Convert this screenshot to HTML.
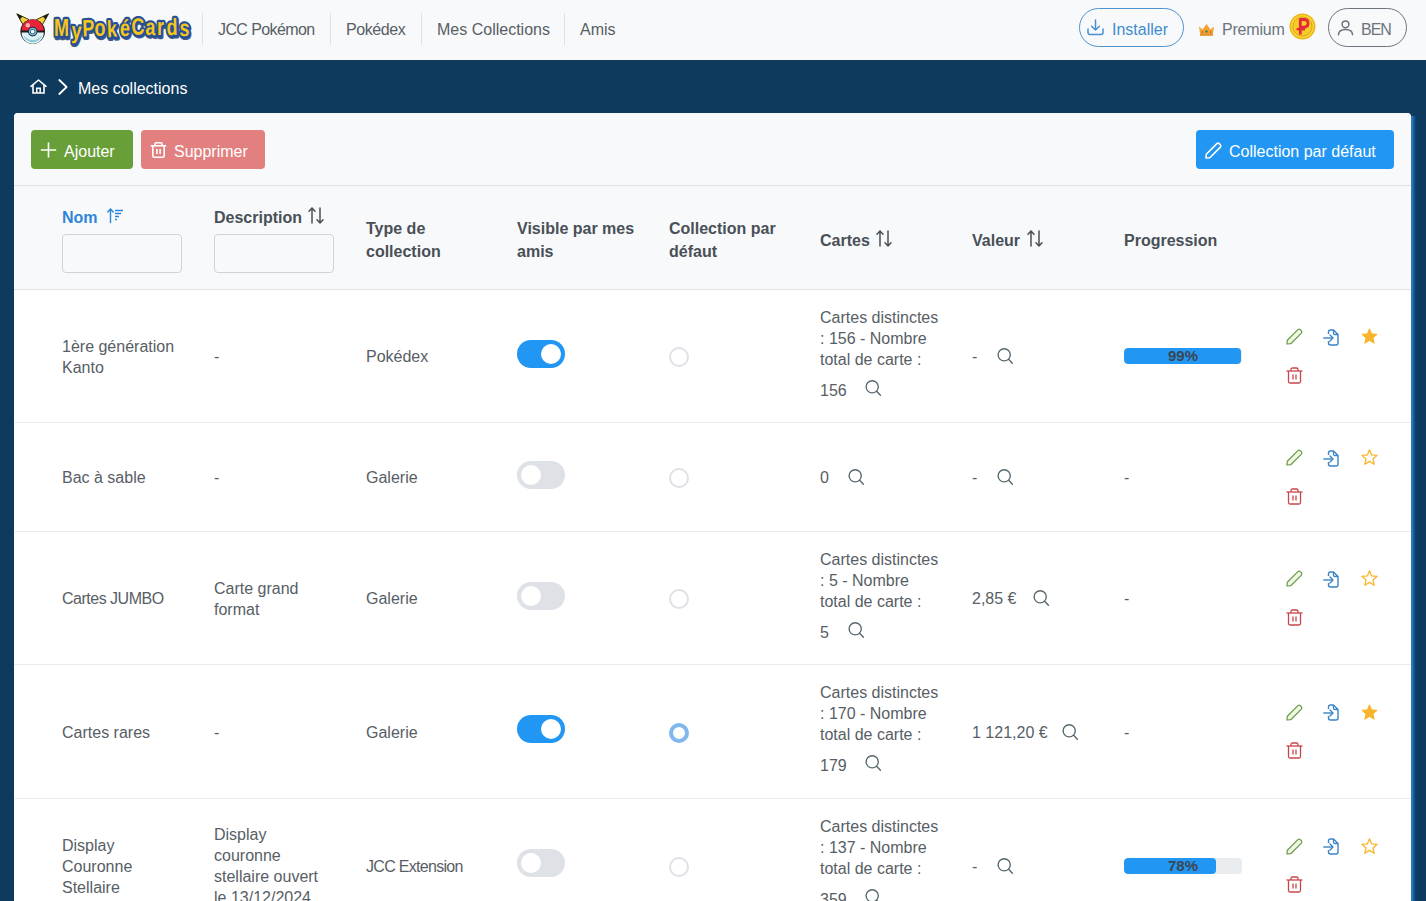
<!DOCTYPE html>
<html lang="fr">
<head>
<meta charset="utf-8">
<title>Mes collections</title>
<style>
*{box-sizing:border-box;}
html,body{margin:0;padding:0;}
body{width:1426px;height:901px;overflow:hidden;position:relative;background:#0e3a5e;font-family:"Liberation Sans",sans-serif;font-size:16px;color:#495057;}
.ic{position:absolute;overflow:visible;}
#hdr{position:absolute;left:0;top:0;width:1426px;height:60px;background:#f8f9fa;}
.nav{position:absolute;top:20px;line-height:20px;color:#575e65;font-size:16px;white-space:nowrap;}
.sep{position:absolute;top:13px;width:1px;height:32px;background:#dee2e6;}
.pill{position:absolute;top:8px;height:39px;border-radius:20px;border:1px solid;}
#bc{position:absolute;left:78px;top:79px;line-height:20px;color:#fff;white-space:nowrap;}
#card{position:absolute;left:14px;top:113px;width:1397px;height:800px;background:#fff;border-radius:4px 4px 0 0;}
#shadow{position:absolute;left:1411px;top:116px;width:7px;height:800px;background:linear-gradient(90deg,#3a78a6 0,#2a7fc2 1px,#1d6ab4 2px,#15549a 3px,#10457c 4px,#0e3d68 5px,#0e3a5e 7px);}
#tb{position:absolute;left:14px;top:113px;width:1397px;height:73px;background:#f8f9fa;border-bottom:1px solid #dee2e6;border-radius:4px 4px 0 0;}
.btn{position:absolute;top:130px;height:39px;border-radius:4px;color:#fff;}
.btn span{position:absolute;top:12px;line-height:20px;white-space:nowrap;}
#th{position:absolute;left:14px;top:186px;width:1397px;height:104px;background:#f8f9fa;border-bottom:1px solid #dee2e6;}
.h{position:absolute;font-weight:700;color:#495057;line-height:23px;white-space:nowrap;}
.inp{position:absolute;top:234px;width:120px;height:39px;border:1px solid #ced4da;border-radius:4px;background:#f8f9fa;}
.row{position:absolute;left:14px;width:1397px;border-bottom:1px solid #e9ecef;background:#fff;}
.t{position:absolute;line-height:21px;white-space:nowrap;color:#575e65;}
.sw{position:absolute;width:48px;height:28px;border-radius:14px;}
.sw.on{background:#2196f3;}
.sw.off{background:#dee2e6;}
.sw i{position:absolute;top:4px;width:20px;height:20px;border-radius:50%;background:#fff;}
.sw.on i{left:24px;}
.sw.off i{left:4px;}
.rd{position:absolute;width:20px;height:20px;border-radius:50%;border:2px solid #dee2e6;background:#fff;}
.rd.on{border:4px solid #7fb7ee;}
.pb{position:absolute;width:118px;height:16px;border-radius:4px;background:#e9ecef;overflow:hidden;}
.pf{position:absolute;left:0;top:0;height:16px;background:#2196f3;border-radius:4px;}
.pl{position:absolute;left:0;top:0;width:118px;text-align:center;font-weight:700;font-size:15px;line-height:16px;color:#3c4650;}

</style>
</head>
<body>
<div id="hdr">
<svg class="ic" style="left:14px;top:10px" width="36" height="36" viewBox="0 0 36 36"><path d="M2.8 3.8 L15 9.6 L9.2 15 Z" fill="#f3d23a" stroke="#2a2400" stroke-width="0.9" stroke-linejoin="round"/><path d="M2.8 3.8 L8.6 6.6 L5.7 9.4 Z" fill="#1e1e1e"/><path d="M34.6 3.8 L22.4 9.6 L28.2 15 Z" fill="#f3d23a" stroke="#2a2400" stroke-width="0.9" stroke-linejoin="round"/><path d="M34.6 3.8 L28.8 6.6 L31.7 9.4 Z" fill="#1e1e1e"/><circle cx="18.7" cy="21.5" r="12.3" fill="#1a1a1a"/><path d="M7.6 20.6 A11.1 11.1 0 0 1 29.8 20.6 Z" fill="#e8243a"/><path d="M7.6 22.6 A11.1 11.1 0 0 0 29.8 22.6 Z" fill="#dff3f6"/><path d="M9.5 25 A9.5 9.5 0 0 0 28 25 A11.1 11.1 0 0 1 9.5 25Z" fill="#8fcad8"/><circle cx="13.8" cy="15.2" r="2.2" fill="#f6b3bc"/><circle cx="18.7" cy="21.6" r="4.8" fill="#1a2a40"/><circle cx="18.7" cy="21.6" r="3.8" fill="#7cc4dc"/><circle cx="18.7" cy="21.6" r="2.6" fill="#2a5a78"/><circle cx="18.7" cy="21.6" r="1.9" fill="#eaf7fb"/></svg><svg class="ic" style="left:50px;top:6.5px" width="145" height="40" viewBox="0 0 145 40"><g transform="scale(1,1.3)"><g transform="translate(1,1.2)" opacity="0.85"><text x="11.5" y="22.31" text-anchor="middle" transform="rotate(0 11.5 16.15)" font-family="Liberation Sans" font-weight="700" font-size="18" fill="#1b3e78" stroke="#1b3e78" stroke-width="3.4" paint-order="stroke" stroke-linejoin="round">M</text><text x="26.5" y="24.23" text-anchor="middle" transform="rotate(3 26.5 18.08)" font-family="Liberation Sans" font-weight="700" font-size="18" fill="#1b3e78" stroke="#1b3e78" stroke-width="3.4" paint-order="stroke" stroke-linejoin="round">y</text><text x="38.5" y="22.31" text-anchor="middle" transform="rotate(-3 38.5 16.15)" font-family="Liberation Sans" font-weight="700" font-size="18" fill="#1b3e78" stroke="#1b3e78" stroke-width="3.4" paint-order="stroke" stroke-linejoin="round">P</text><text x="50.0" y="22.69" text-anchor="middle" transform="rotate(0 50.0 16.54)" font-family="Liberation Sans" font-weight="700" font-size="18" fill="#1b3e78" stroke="#1b3e78" stroke-width="3.4" paint-order="stroke" stroke-linejoin="round">o</text><text x="62.0" y="23.08" text-anchor="middle" transform="rotate(-3 62.0 16.92)" font-family="Liberation Sans" font-weight="700" font-size="18" fill="#1b3e78" stroke="#1b3e78" stroke-width="3.4" paint-order="stroke" stroke-linejoin="round">k</text><text x="75.0" y="22.31" text-anchor="middle" transform="rotate(2 75.0 16.15)" font-family="Liberation Sans" font-weight="700" font-size="18" fill="#1b3e78" stroke="#1b3e78" stroke-width="3.4" paint-order="stroke" stroke-linejoin="round">é</text><text x="88.0" y="21.15" text-anchor="middle" transform="rotate(-3 88.0 15.00)" font-family="Liberation Sans" font-weight="700" font-size="18" fill="#1b3e78" stroke="#1b3e78" stroke-width="3.4" paint-order="stroke" stroke-linejoin="round">C</text><text x="100.5" y="21.54" text-anchor="middle" transform="rotate(2 100.5 15.38)" font-family="Liberation Sans" font-weight="700" font-size="18" fill="#1b3e78" stroke="#1b3e78" stroke-width="3.4" paint-order="stroke" stroke-linejoin="round">a</text><text x="110.5" y="21.54" text-anchor="middle" transform="rotate(0 110.5 15.38)" font-family="Liberation Sans" font-weight="700" font-size="18" fill="#1b3e78" stroke="#1b3e78" stroke-width="3.4" paint-order="stroke" stroke-linejoin="round">r</text><text x="122.0" y="21.54" text-anchor="middle" transform="rotate(-2 122.0 15.38)" font-family="Liberation Sans" font-weight="700" font-size="18" fill="#1b3e78" stroke="#1b3e78" stroke-width="3.4" paint-order="stroke" stroke-linejoin="round">d</text><text x="134.5" y="22.31" text-anchor="middle" transform="rotate(3 134.5 16.15)" font-family="Liberation Sans" font-weight="700" font-size="18" fill="#1b3e78" stroke="#1b3e78" stroke-width="3.4" paint-order="stroke" stroke-linejoin="round">s</text></g><text x="11.5" y="22.31" text-anchor="middle" transform="rotate(0 11.5 16.15)" font-family="Liberation Sans" font-weight="700" font-size="18" fill="#f6c619" stroke="#264f96" stroke-width="3.4" paint-order="stroke" stroke-linejoin="round">M</text><text x="26.5" y="24.23" text-anchor="middle" transform="rotate(3 26.5 18.08)" font-family="Liberation Sans" font-weight="700" font-size="18" fill="#f6c619" stroke="#264f96" stroke-width="3.4" paint-order="stroke" stroke-linejoin="round">y</text><text x="38.5" y="22.31" text-anchor="middle" transform="rotate(-3 38.5 16.15)" font-family="Liberation Sans" font-weight="700" font-size="18" fill="#f6c619" stroke="#264f96" stroke-width="3.4" paint-order="stroke" stroke-linejoin="round">P</text><text x="50.0" y="22.69" text-anchor="middle" transform="rotate(0 50.0 16.54)" font-family="Liberation Sans" font-weight="700" font-size="18" fill="#f6c619" stroke="#264f96" stroke-width="3.4" paint-order="stroke" stroke-linejoin="round">o</text><text x="62.0" y="23.08" text-anchor="middle" transform="rotate(-3 62.0 16.92)" font-family="Liberation Sans" font-weight="700" font-size="18" fill="#f6c619" stroke="#264f96" stroke-width="3.4" paint-order="stroke" stroke-linejoin="round">k</text><text x="75.0" y="22.31" text-anchor="middle" transform="rotate(2 75.0 16.15)" font-family="Liberation Sans" font-weight="700" font-size="18" fill="#f6c619" stroke="#264f96" stroke-width="3.4" paint-order="stroke" stroke-linejoin="round">é</text><text x="88.0" y="21.15" text-anchor="middle" transform="rotate(-3 88.0 15.00)" font-family="Liberation Sans" font-weight="700" font-size="18" fill="#f6c619" stroke="#264f96" stroke-width="3.4" paint-order="stroke" stroke-linejoin="round">C</text><text x="100.5" y="21.54" text-anchor="middle" transform="rotate(2 100.5 15.38)" font-family="Liberation Sans" font-weight="700" font-size="18" fill="#f6c619" stroke="#264f96" stroke-width="3.4" paint-order="stroke" stroke-linejoin="round">a</text><text x="110.5" y="21.54" text-anchor="middle" transform="rotate(0 110.5 15.38)" font-family="Liberation Sans" font-weight="700" font-size="18" fill="#f6c619" stroke="#264f96" stroke-width="3.4" paint-order="stroke" stroke-linejoin="round">r</text><text x="122.0" y="21.54" text-anchor="middle" transform="rotate(-2 122.0 15.38)" font-family="Liberation Sans" font-weight="700" font-size="18" fill="#f6c619" stroke="#264f96" stroke-width="3.4" paint-order="stroke" stroke-linejoin="round">d</text><text x="134.5" y="22.31" text-anchor="middle" transform="rotate(3 134.5 16.15)" font-family="Liberation Sans" font-weight="700" font-size="18" fill="#f6c619" stroke="#264f96" stroke-width="3.4" paint-order="stroke" stroke-linejoin="round">s</text></g></svg>
<div class="nav" style="left:218px;letter-spacing:-0.6px">JCC Pokémon</div>
<div class="nav" style="left:346px;letter-spacing:-0.4px">Pokédex</div>
<div class="nav" style="left:437px">Mes Collections</div>
<div class="nav" style="left:580px">Amis</div>
<div class="sep" style="left:202px"></div>
<div class="sep" style="left:330px"></div>
<div class="sep" style="left:421px"></div>
<div class="sep" style="left:564px"></div>
<div class="pill" style="left:1079px;width:105px;border-color:#4d93d0;"></div>
<svg class="ic" style="left:1087px;top:19px" width="17" height="17" viewBox="0 0 17 17"><path d="M8.5 1 V11 M4.6 7.2 L8.5 11 L12.4 7.2" fill="none" stroke="#4a90d0" stroke-width="1.5" stroke-linecap="round" stroke-linejoin="round"/><path d="M1 10 V13.5 Q1 15.5 3 15.5 H14 Q16 15.5 16 13.5 V10" fill="none" stroke="#4a90d0" stroke-width="1.5" stroke-linecap="round"/></svg>
<div class="nav" style="left:1112px;color:#3f8ccf">Installer</div>
<svg class="ic" style="left:1198px;top:23px" width="17" height="13" viewBox="0 0 17 13"><path d="M1 3.5 L4.5 6.5 L8.5 1 L12.5 6.5 L16 3.5 L15 10.5 H2 Z" fill="#f4a234"/><rect x="2" y="10.2" width="13" height="2.6" fill="#e89224"/><circle cx="8.5" cy="8.5" r="1.2" fill="#3b8a3e"/><circle cx="4.5" cy="9" r="0.7" fill="#c0392b"/><circle cx="12.5" cy="9" r="0.7" fill="#c0392b"/></svg>
<div class="nav" style="left:1222px;color:#6c757d;letter-spacing:-0.2px">Premium</div>
<svg class="ic" style="left:1289px;top:13px" width="27" height="27" viewBox="0 0 27 27"><circle cx="13.5" cy="13.5" r="13" fill="#f3c21b"/><circle cx="13.5" cy="13.5" r="12.2" fill="#f8d43a" stroke="#e2a90f" stroke-width="0.8"/><circle cx="13.5" cy="13.5" r="9.6" fill="#f7cc2a" stroke="#d99e12" stroke-width="0.9"/><path d="M11.3 21.5 V6.5 H15 Q19 6.5 19 10.3 Q19 14.1 15 14.1 H11.3" fill="none" stroke="#e5283a" stroke-width="2.8" stroke-linejoin="round"/><path d="M7.6 16.2 H16" stroke="#e5283a" stroke-width="2.4"/></svg>
<div class="pill" style="left:1328px;width:79px;border-color:#6c757d;"></div>
<svg class="ic" style="left:1337px;top:20px" width="17" height="16" viewBox="0 0 17 16"><circle cx="8.5" cy="4.3" r="3.4" fill="none" stroke="#6c757d" stroke-width="1.5"/><path d="M1.5 14.8 Q1.5 9.5 8.5 9.5 Q15.5 9.5 15.5 14.8" fill="none" stroke="#6c757d" stroke-width="1.5" stroke-linecap="round"/></svg>
<div class="nav" style="left:1361px;color:#6c757d;letter-spacing:-1px">BEN</div>
</div>
<svg class="ic" style="left:30px;top:79px" width="17" height="15" viewBox="0 0 17 15"><path d="M1 7.3 L8.5 1 L16 7.3" fill="none" stroke="#fff" stroke-width="1.6" stroke-linecap="round" stroke-linejoin="round"/><path d="M3 6 V14 H14 V6" fill="none" stroke="#fff" stroke-width="1.6"/><path d="M6.8 14 V9.3 H10.2 V14" fill="none" stroke="#fff" stroke-width="1.5"/></svg>
<svg class="ic" style="left:58px;top:79px" width="10" height="16" viewBox="0 0 10 16"><path d="M1.3 1 L8.6 8 L1.3 15" fill="none" stroke="#fff" stroke-width="1.8" stroke-linecap="round" stroke-linejoin="round"/></svg>
<div id="bc">Mes collections</div>
<div id="card"></div><div id="shadow"></div><div id="tb"></div>
<div class="btn" style="left:31px;width:102px;background:#689f38;"><span style="left:33px">Ajouter</span></div>
<svg class="ic" style="left:40px;top:142px" width="17" height="16" viewBox="0 0 17 16"><path d="M8.5 0.5 V15.5 M0.8 8 H16.2" stroke="#fff" stroke-width="1.6"/></svg>
<div class="btn" style="left:141px;width:124px;background:#e28080;"><span style="left:33px">Supprimer</span></div>
<svg class="ic" style="left:150px;top:142px" width="17" height="16" viewBox="0 0 17 16"><path d="M0.8 3.8 H16.2" stroke="#fff" stroke-width="1.6"/><path d="M5 3.8 V2.2 Q5 0.8 6.4 0.8 H10.6 Q12 0.8 12 2.2 V3.8" fill="none" stroke="#fff" stroke-width="1.6"/><path d="M2.8 3.8 V13.7 Q2.8 15.2 4.3 15.2 H12.7 Q14.2 15.2 14.2 13.7 V3.8" fill="none" stroke="#fff" stroke-width="1.6"/><path d="M6.9 7 V12 M10.1 7 V12" stroke="#fff" stroke-width="1.6"/></svg>
<div class="btn" style="left:1196px;width:198px;background:#2196f3;"><span style="left:33px">Collection par défaut</span></div>
<svg class="ic" style="left:1205px;top:142px" width="18" height="17" viewBox="0 0 18 17"><path d="M1 16 L1.3 12.2 L11.9 1.6 Q13 0.6 14.2 1.6 L15.4 2.8 Q16.4 4 15.4 5.1 L4.8 15.7 Z" fill="none" stroke="#fff" stroke-width="1.6" stroke-linejoin="round"/></svg>
<div id="th"></div>
<div class="h" style="left:62px;top:206px;color:#2f86d8">Nom</div>
<svg class="ic" style="left:107px;top:208px" width="17" height="15" viewBox="0 0 17 15"><path d="M3.5 14.5 V1 M0.8 4 L3.5 1 L6.2 4" fill="none" stroke="#2f86d8" stroke-width="1.4" stroke-linecap="round" stroke-linejoin="round"/><path d="M8 2.5 H16 M8 5.5 H14 M8 8.5 H12 M8 11.5 H10" stroke="#2f86d8" stroke-width="1.5"/></svg>
<div class="h" style="left:214px;top:206px">Description</div>
<svg class="ic" style="left:308px;top:207px" width="16" height="17" viewBox="0 0 16 17"><path d="M4 16 V1 M1 4.2 L4 1 L7 4.2" fill="none" stroke="#495057" stroke-width="1.5" stroke-linecap="round" stroke-linejoin="round"/><path d="M12 1 V16 M9 12.8 L12 16 L15 12.8" fill="none" stroke="#495057" stroke-width="1.5" stroke-linecap="round" stroke-linejoin="round"/></svg>
<div class="inp" style="left:62px"></div><div class="inp" style="left:214px"></div>
<div class="h" style="left:366px;top:217px">Type de<br>collection</div>
<div class="h" style="left:517px;top:217px">Visible par mes<br>amis</div>
<div class="h" style="left:669px;top:217px">Collection par<br>défaut</div>
<div class="h" style="left:820px;top:229px">Cartes</div>
<svg class="ic" style="left:876px;top:230px" width="16" height="17" viewBox="0 0 16 17"><path d="M4 16 V1 M1 4.2 L4 1 L7 4.2" fill="none" stroke="#495057" stroke-width="1.5" stroke-linecap="round" stroke-linejoin="round"/><path d="M12 1 V16 M9 12.8 L12 16 L15 12.8" fill="none" stroke="#495057" stroke-width="1.5" stroke-linecap="round" stroke-linejoin="round"/></svg>
<div class="h" style="left:972px;top:229px">Valeur</div>
<svg class="ic" style="left:1027px;top:230px" width="16" height="17" viewBox="0 0 16 17"><path d="M4 16 V1 M1 4.2 L4 1 L7 4.2" fill="none" stroke="#495057" stroke-width="1.5" stroke-linecap="round" stroke-linejoin="round"/><path d="M12 1 V16 M9 12.8 L12 16 L15 12.8" fill="none" stroke="#495057" stroke-width="1.5" stroke-linecap="round" stroke-linejoin="round"/></svg>
<div class="h" style="left:1124px;top:229px">Progression</div>
<div id="cardwrap">
<div class="row" style="top:290px;height:133px"></div><div class="t" style="left:62px;top:336px;">1ère génération</div><div class="t" style="left:62px;top:357px;">Kanto</div><div class="t" style="left:214px;top:346px;">-</div><div class="t" style="left:366px;top:346px;">Pokédex</div><div class="sw on" style="left:517px;top:340px"><i></i></div><div class="rd " style="left:669px;top:347px"></div><div class="t" style="left:820px;top:307px;">Cartes distinctes</div><div class="t" style="left:820px;top:328px;">: 156 - Nombre</div><div class="t" style="left:820px;top:349px;">total de carte :</div><div class="t" style="left:820px;top:380px;">156</div><svg class="ic" style="left:865px;top:380px" width="17" height="17" viewBox="0 0 17 17" ><circle cx="7.2" cy="6.8" r="6.1" fill="none" stroke="#56676e" stroke-width="1.35"/><path d="M11.6 11.3 L15.4 15.2" stroke="#56676e" stroke-width="1.4" stroke-linecap="round"/></svg><div class="t" style="left:972px;top:346px;">-</div><svg class="ic" style="left:997px;top:348px" width="17" height="17" viewBox="0 0 17 17" ><circle cx="7.2" cy="6.8" r="6.1" fill="none" stroke="#56676e" stroke-width="1.35"/><path d="M11.6 11.3 L15.4 15.2" stroke="#56676e" stroke-width="1.4" stroke-linecap="round"/></svg><div class="pb" style="left:1124px;top:348px"><div class="pf" style="width:116.8px"></div><div class="pl">99%</div></div><svg class="ic" style="left:1286px;top:328px" width="17" height="17" viewBox="0 0 17 17" ><path d="M1 16 L1.3 12.2 L11.9 1.6 Q13 0.6 14.2 1.6 L15.4 2.8 Q16.4 4 15.4 5.1 L4.8 15.7 Z" fill="#eef8e2" stroke="#6f9a4c" stroke-width="1.25" stroke-linejoin="round"/></svg><svg class="ic" style="left:1323px;top:328.5px" width="17" height="17" viewBox="0 0 17 17" ><path d="M5.5 5 V3 Q5.5 1 7.5 1 H10.5 L15 5.5 V14 Q15 16 13 16 H7.5 Q5.5 16 5.5 14 V12" fill="none" stroke="#3a84c8" stroke-width="1.4" stroke-linejoin="round"/><path d="M10.5 1 V4 Q10.5 5.5 12 5.5 H15" fill="none" stroke="#3a84c8" stroke-width="1.3"/><path d="M0.3 9 H10" stroke="#3a84c8" stroke-width="1.4"/><path d="M7 6 L10 9 L7 12" fill="none" stroke="#3a84c8" stroke-width="1.4" stroke-linecap="round" stroke-linejoin="round"/></svg><svg class="ic" style="left:1361px;top:328px" width="17" height="17" viewBox="0 0 17 17" ><polygon points="8.50,0.80 10.62,5.89 16.11,6.33 11.92,9.91 13.20,15.27 8.50,12.40 3.80,15.27 5.08,9.91 0.89,6.33 6.38,5.89" fill="#f8b52b" stroke="#f8b52b" stroke-width="1" stroke-linejoin="round"/></svg><svg class="ic" style="left:1286px;top:366.5px" width="17" height="17" viewBox="0 0 17 17" ><path d="M0.5 4 H16.5" stroke="#c8464b" stroke-width="1.3"/><path d="M5 4 V2.5 Q5 1 6.5 1 H10.5 Q12 1 12 2.5 V4" fill="none" stroke="#c8464b" stroke-width="1.3"/><path d="M2.5 4 V14.5 Q2.5 16 4 16 H13 Q14.5 16 14.5 14.5 V4" fill="none" stroke="#c8464b" stroke-width="1.3"/><path d="M7 7.5 V12.5 M10 7.5 V12.5" stroke="#c8464b" stroke-width="1.3"/></svg><div class="row" style="top:423px;height:109px"></div><div class="t" style="left:62px;top:467px;">Bac à sable</div><div class="t" style="left:214px;top:467px;">-</div><div class="t" style="left:366px;top:467px;">Galerie</div><div class="sw off" style="left:517px;top:461px"><i></i></div><div class="rd " style="left:669px;top:468px"></div><div class="t" style="left:820px;top:467px;">0</div><svg class="ic" style="left:848px;top:469px" width="17" height="17" viewBox="0 0 17 17" ><circle cx="7.2" cy="6.8" r="6.1" fill="none" stroke="#56676e" stroke-width="1.35"/><path d="M11.6 11.3 L15.4 15.2" stroke="#56676e" stroke-width="1.4" stroke-linecap="round"/></svg><div class="t" style="left:972px;top:467px;">-</div><svg class="ic" style="left:997px;top:469px" width="17" height="17" viewBox="0 0 17 17" ><circle cx="7.2" cy="6.8" r="6.1" fill="none" stroke="#56676e" stroke-width="1.35"/><path d="M11.6 11.3 L15.4 15.2" stroke="#56676e" stroke-width="1.4" stroke-linecap="round"/></svg><div class="t" style="left:1124px;top:467px;">-</div><svg class="ic" style="left:1286px;top:449px" width="17" height="17" viewBox="0 0 17 17" ><path d="M1 16 L1.3 12.2 L11.9 1.6 Q13 0.6 14.2 1.6 L15.4 2.8 Q16.4 4 15.4 5.1 L4.8 15.7 Z" fill="#eef8e2" stroke="#6f9a4c" stroke-width="1.25" stroke-linejoin="round"/></svg><svg class="ic" style="left:1323px;top:449.5px" width="17" height="17" viewBox="0 0 17 17" ><path d="M5.5 5 V3 Q5.5 1 7.5 1 H10.5 L15 5.5 V14 Q15 16 13 16 H7.5 Q5.5 16 5.5 14 V12" fill="none" stroke="#3a84c8" stroke-width="1.4" stroke-linejoin="round"/><path d="M10.5 1 V4 Q10.5 5.5 12 5.5 H15" fill="none" stroke="#3a84c8" stroke-width="1.3"/><path d="M0.3 9 H10" stroke="#3a84c8" stroke-width="1.4"/><path d="M7 6 L10 9 L7 12" fill="none" stroke="#3a84c8" stroke-width="1.4" stroke-linecap="round" stroke-linejoin="round"/></svg><svg class="ic" style="left:1361px;top:449px" width="17" height="17" viewBox="0 0 17 17" ><polygon points="8.50,0.80 10.62,5.89 16.11,6.33 11.92,9.91 13.20,15.27 8.50,12.40 3.80,15.27 5.08,9.91 0.89,6.33 6.38,5.89" fill="none" stroke="#f8b52b" stroke-width="1.3" stroke-linejoin="round"/></svg><svg class="ic" style="left:1286px;top:487.5px" width="17" height="17" viewBox="0 0 17 17" ><path d="M0.5 4 H16.5" stroke="#c8464b" stroke-width="1.3"/><path d="M5 4 V2.5 Q5 1 6.5 1 H10.5 Q12 1 12 2.5 V4" fill="none" stroke="#c8464b" stroke-width="1.3"/><path d="M2.5 4 V14.5 Q2.5 16 4 16 H13 Q14.5 16 14.5 14.5 V4" fill="none" stroke="#c8464b" stroke-width="1.3"/><path d="M7 7.5 V12.5 M10 7.5 V12.5" stroke="#c8464b" stroke-width="1.3"/></svg><div class="row" style="top:532px;height:133px"></div><div class="t" style="left:62px;top:588px;letter-spacing:-0.5px">Cartes JUMBO</div><div class="t" style="left:214px;top:578px;">Carte grand</div><div class="t" style="left:214px;top:599px;">format</div><div class="t" style="left:366px;top:588px;">Galerie</div><div class="sw off" style="left:517px;top:582px"><i></i></div><div class="rd " style="left:669px;top:589px"></div><div class="t" style="left:820px;top:549px;">Cartes distinctes</div><div class="t" style="left:820px;top:570px;">: 5 - Nombre</div><div class="t" style="left:820px;top:591px;">total de carte :</div><div class="t" style="left:820px;top:622px;">5</div><svg class="ic" style="left:848px;top:622px" width="17" height="17" viewBox="0 0 17 17" ><circle cx="7.2" cy="6.8" r="6.1" fill="none" stroke="#56676e" stroke-width="1.35"/><path d="M11.6 11.3 L15.4 15.2" stroke="#56676e" stroke-width="1.4" stroke-linecap="round"/></svg><div class="t" style="left:972px;top:588px;">2,85 €</div><svg class="ic" style="left:1033px;top:590px" width="17" height="17" viewBox="0 0 17 17" ><circle cx="7.2" cy="6.8" r="6.1" fill="none" stroke="#56676e" stroke-width="1.35"/><path d="M11.6 11.3 L15.4 15.2" stroke="#56676e" stroke-width="1.4" stroke-linecap="round"/></svg><div class="t" style="left:1124px;top:588px;">-</div><svg class="ic" style="left:1286px;top:570px" width="17" height="17" viewBox="0 0 17 17" ><path d="M1 16 L1.3 12.2 L11.9 1.6 Q13 0.6 14.2 1.6 L15.4 2.8 Q16.4 4 15.4 5.1 L4.8 15.7 Z" fill="#eef8e2" stroke="#6f9a4c" stroke-width="1.25" stroke-linejoin="round"/></svg><svg class="ic" style="left:1323px;top:570.5px" width="17" height="17" viewBox="0 0 17 17" ><path d="M5.5 5 V3 Q5.5 1 7.5 1 H10.5 L15 5.5 V14 Q15 16 13 16 H7.5 Q5.5 16 5.5 14 V12" fill="none" stroke="#3a84c8" stroke-width="1.4" stroke-linejoin="round"/><path d="M10.5 1 V4 Q10.5 5.5 12 5.5 H15" fill="none" stroke="#3a84c8" stroke-width="1.3"/><path d="M0.3 9 H10" stroke="#3a84c8" stroke-width="1.4"/><path d="M7 6 L10 9 L7 12" fill="none" stroke="#3a84c8" stroke-width="1.4" stroke-linecap="round" stroke-linejoin="round"/></svg><svg class="ic" style="left:1361px;top:570px" width="17" height="17" viewBox="0 0 17 17" ><polygon points="8.50,0.80 10.62,5.89 16.11,6.33 11.92,9.91 13.20,15.27 8.50,12.40 3.80,15.27 5.08,9.91 0.89,6.33 6.38,5.89" fill="none" stroke="#f8b52b" stroke-width="1.3" stroke-linejoin="round"/></svg><svg class="ic" style="left:1286px;top:608.5px" width="17" height="17" viewBox="0 0 17 17" ><path d="M0.5 4 H16.5" stroke="#c8464b" stroke-width="1.3"/><path d="M5 4 V2.5 Q5 1 6.5 1 H10.5 Q12 1 12 2.5 V4" fill="none" stroke="#c8464b" stroke-width="1.3"/><path d="M2.5 4 V14.5 Q2.5 16 4 16 H13 Q14.5 16 14.5 14.5 V4" fill="none" stroke="#c8464b" stroke-width="1.3"/><path d="M7 7.5 V12.5 M10 7.5 V12.5" stroke="#c8464b" stroke-width="1.3"/></svg><div class="row" style="top:665px;height:134px"></div><div class="t" style="left:62px;top:722px;">Cartes rares</div><div class="t" style="left:214px;top:722px;">-</div><div class="t" style="left:366px;top:722px;">Galerie</div><div class="sw on" style="left:517px;top:715px"><i></i></div><div class="rd on" style="left:669px;top:723px"></div><div class="t" style="left:820px;top:682px;">Cartes distinctes</div><div class="t" style="left:820px;top:703px;">: 170 - Nombre</div><div class="t" style="left:820px;top:724px;">total de carte :</div><div class="t" style="left:820px;top:755px;">179</div><svg class="ic" style="left:865px;top:755px" width="17" height="17" viewBox="0 0 17 17" ><circle cx="7.2" cy="6.8" r="6.1" fill="none" stroke="#56676e" stroke-width="1.35"/><path d="M11.6 11.3 L15.4 15.2" stroke="#56676e" stroke-width="1.4" stroke-linecap="round"/></svg><div class="t" style="left:972px;top:722px;">1 121,20 €</div><svg class="ic" style="left:1062px;top:724px" width="17" height="17" viewBox="0 0 17 17" ><circle cx="7.2" cy="6.8" r="6.1" fill="none" stroke="#56676e" stroke-width="1.35"/><path d="M11.6 11.3 L15.4 15.2" stroke="#56676e" stroke-width="1.4" stroke-linecap="round"/></svg><div class="t" style="left:1124px;top:722px;">-</div><svg class="ic" style="left:1286px;top:703.5px" width="17" height="17" viewBox="0 0 17 17" ><path d="M1 16 L1.3 12.2 L11.9 1.6 Q13 0.6 14.2 1.6 L15.4 2.8 Q16.4 4 15.4 5.1 L4.8 15.7 Z" fill="#eef8e2" stroke="#6f9a4c" stroke-width="1.25" stroke-linejoin="round"/></svg><svg class="ic" style="left:1323px;top:704.0px" width="17" height="17" viewBox="0 0 17 17" ><path d="M5.5 5 V3 Q5.5 1 7.5 1 H10.5 L15 5.5 V14 Q15 16 13 16 H7.5 Q5.5 16 5.5 14 V12" fill="none" stroke="#3a84c8" stroke-width="1.4" stroke-linejoin="round"/><path d="M10.5 1 V4 Q10.5 5.5 12 5.5 H15" fill="none" stroke="#3a84c8" stroke-width="1.3"/><path d="M0.3 9 H10" stroke="#3a84c8" stroke-width="1.4"/><path d="M7 6 L10 9 L7 12" fill="none" stroke="#3a84c8" stroke-width="1.4" stroke-linecap="round" stroke-linejoin="round"/></svg><svg class="ic" style="left:1361px;top:703.5px" width="17" height="17" viewBox="0 0 17 17" ><polygon points="8.50,0.80 10.62,5.89 16.11,6.33 11.92,9.91 13.20,15.27 8.50,12.40 3.80,15.27 5.08,9.91 0.89,6.33 6.38,5.89" fill="#f8b52b" stroke="#f8b52b" stroke-width="1" stroke-linejoin="round"/></svg><svg class="ic" style="left:1286px;top:742.0px" width="17" height="17" viewBox="0 0 17 17" ><path d="M0.5 4 H16.5" stroke="#c8464b" stroke-width="1.3"/><path d="M5 4 V2.5 Q5 1 6.5 1 H10.5 Q12 1 12 2.5 V4" fill="none" stroke="#c8464b" stroke-width="1.3"/><path d="M2.5 4 V14.5 Q2.5 16 4 16 H13 Q14.5 16 14.5 14.5 V4" fill="none" stroke="#c8464b" stroke-width="1.3"/><path d="M7 7.5 V12.5 M10 7.5 V12.5" stroke="#c8464b" stroke-width="1.3"/></svg><div class="row" style="top:799px;height:133px"></div><div class="t" style="left:62px;top:835px;">Display</div><div class="t" style="left:62px;top:856px;">Couronne</div><div class="t" style="left:62px;top:877px;">Stellaire</div><div class="t" style="left:214px;top:824px;">Display</div><div class="t" style="left:214px;top:845px;">couronne</div><div class="t" style="left:214px;top:866px;">stellaire ouvert</div><div class="t" style="left:214px;top:887px;">le 13/12/2024</div><div class="t" style="left:366px;top:856px;letter-spacing:-0.7px">JCC Extension</div><div class="sw off" style="left:517px;top:849px"><i></i></div><div class="rd " style="left:669px;top:857px"></div><div class="t" style="left:820px;top:816px;">Cartes distinctes</div><div class="t" style="left:820px;top:837px;">: 137 - Nombre</div><div class="t" style="left:820px;top:858px;">total de carte :</div><div class="t" style="left:820px;top:889px;">359</div><svg class="ic" style="left:865px;top:889px" width="17" height="17" viewBox="0 0 17 17" ><circle cx="7.2" cy="6.8" r="6.1" fill="none" stroke="#56676e" stroke-width="1.35"/><path d="M11.6 11.3 L15.4 15.2" stroke="#56676e" stroke-width="1.4" stroke-linecap="round"/></svg><div class="t" style="left:972px;top:856px;">-</div><svg class="ic" style="left:997px;top:858px" width="17" height="17" viewBox="0 0 17 17" ><circle cx="7.2" cy="6.8" r="6.1" fill="none" stroke="#56676e" stroke-width="1.35"/><path d="M11.6 11.3 L15.4 15.2" stroke="#56676e" stroke-width="1.4" stroke-linecap="round"/></svg><div class="pb" style="left:1124px;top:858px"><div class="pf" style="width:92.0px"></div><div class="pl">78%</div></div><svg class="ic" style="left:1286px;top:837.5px" width="17" height="17" viewBox="0 0 17 17" ><path d="M1 16 L1.3 12.2 L11.9 1.6 Q13 0.6 14.2 1.6 L15.4 2.8 Q16.4 4 15.4 5.1 L4.8 15.7 Z" fill="#eef8e2" stroke="#6f9a4c" stroke-width="1.25" stroke-linejoin="round"/></svg><svg class="ic" style="left:1323px;top:838.0px" width="17" height="17" viewBox="0 0 17 17" ><path d="M5.5 5 V3 Q5.5 1 7.5 1 H10.5 L15 5.5 V14 Q15 16 13 16 H7.5 Q5.5 16 5.5 14 V12" fill="none" stroke="#3a84c8" stroke-width="1.4" stroke-linejoin="round"/><path d="M10.5 1 V4 Q10.5 5.5 12 5.5 H15" fill="none" stroke="#3a84c8" stroke-width="1.3"/><path d="M0.3 9 H10" stroke="#3a84c8" stroke-width="1.4"/><path d="M7 6 L10 9 L7 12" fill="none" stroke="#3a84c8" stroke-width="1.4" stroke-linecap="round" stroke-linejoin="round"/></svg><svg class="ic" style="left:1361px;top:837.5px" width="17" height="17" viewBox="0 0 17 17" ><polygon points="8.50,0.80 10.62,5.89 16.11,6.33 11.92,9.91 13.20,15.27 8.50,12.40 3.80,15.27 5.08,9.91 0.89,6.33 6.38,5.89" fill="none" stroke="#f8b52b" stroke-width="1.3" stroke-linejoin="round"/></svg><svg class="ic" style="left:1286px;top:876.0px" width="17" height="17" viewBox="0 0 17 17" ><path d="M0.5 4 H16.5" stroke="#c8464b" stroke-width="1.3"/><path d="M5 4 V2.5 Q5 1 6.5 1 H10.5 Q12 1 12 2.5 V4" fill="none" stroke="#c8464b" stroke-width="1.3"/><path d="M2.5 4 V14.5 Q2.5 16 4 16 H13 Q14.5 16 14.5 14.5 V4" fill="none" stroke="#c8464b" stroke-width="1.3"/><path d="M7 7.5 V12.5 M10 7.5 V12.5" stroke="#c8464b" stroke-width="1.3"/></svg>
</div>
</body>
</html>
